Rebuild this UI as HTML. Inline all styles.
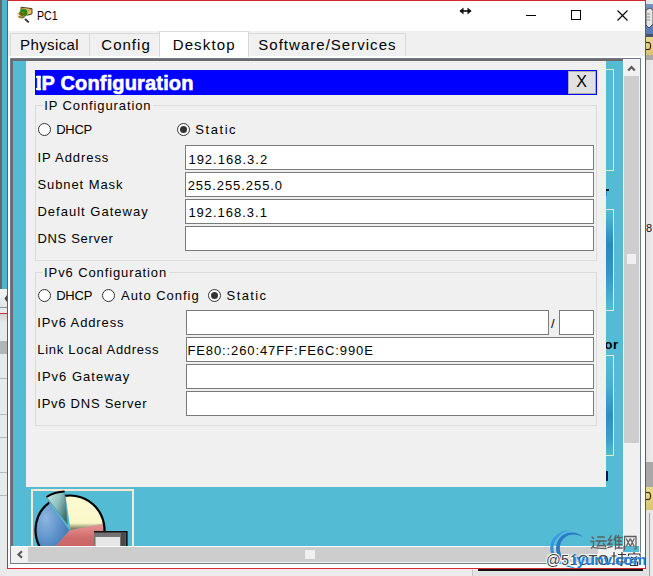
<!DOCTYPE html>
<html><head><meta charset="utf-8">
<style>
*{margin:0;padding:0;box-sizing:border-box}
html,body{width:653px;height:576px;overflow:hidden;background:#ececec;position:relative;font-family:"Liberation Sans",sans-serif;color:#000}
.a{position:absolute}
.t{position:absolute;white-space:nowrap;line-height:1}
.fld{position:absolute;background:#fff;border:1px solid #7a7a7a;height:25px}
.gb{position:absolute;border:1px solid #dcdcdc}
.rad{position:absolute;width:13px;height:13px;border:1px solid #333;border-radius:50%;background:#fff}
.rad.on::after{content:"";position:absolute;left:2px;top:2px;width:7px;height:7px;border-radius:50%;background:#333}
.lbl{font-size:13px;letter-spacing:0.6px}
.ft{font-size:13px;letter-spacing:0.75px}
</style></head><body>
<!-- left strip (background window) -->
<div class="a" style="left:0;top:0;width:2px;height:289px;background:#666"></div>
<div class="a" style="left:2px;top:0;width:5px;height:289px;background:#4fb3ca"></div>
<div class="a" style="left:0;top:289px;width:7px;height:287px;background:#e9e9e9"></div>
<div class="a" style="left:0;top:289px;width:7px;height:18px;background:linear-gradient(180deg,#f4f4f4,#e4e4e4)"></div>
<svg class="a" style="left:4px;top:295px" width="3" height="7" viewBox="0 0 3 7"><path d="M3 0 L0.5 3.5 L3 7 Z" fill="#444"/></svg>
<div class="a" style="left:0;top:307px;width:7px;height:1px;background:#8a93a3"></div>
<div class="a" style="left:0;top:313px;width:7px;height:1px;background:#d9262f"></div>
<div class="a" style="left:0;top:314px;width:7px;height:8px;background:linear-gradient(180deg,#d2d2d2,#e8e8e8)"></div>
<div class="a" style="left:0;top:341px;width:7px;height:13px;background:#b4b4b4"></div>
<div class="a" style="left:0;top:378px;width:7px;height:1px;background:#b8b8b8"></div>
<div class="a" style="left:0;top:414px;width:7px;height:1px;background:#b8b8b8"></div>
<div class="a" style="left:0;top:437px;width:7px;height:1px;background:#b8b8b8"></div>
<div class="a" style="left:0;top:472px;width:7px;height:1px;background:#b8b8b8"></div>
<div class="a" style="left:0;top:495px;width:7px;height:1px;background:#b8b8b8"></div>
<!-- right strip (background window) -->
<div class="a" style="left:646px;top:0;width:7px;height:576px;background:linear-gradient(90deg,#e2e2e2,#ececec)"></div>
<div class="a" style="left:646px;top:4px;width:7px;height:30px;background:linear-gradient(180deg,#7592c2,#587bb2)"></div>
<svg class="a" style="left:646px;top:6px" width="7" height="24" viewBox="0 0 7 24"><path d="M0 4 L4 2 L7 4 L7 18 L3 22 L0 19 Z" fill="#e6e6e6" stroke="#333" stroke-width="0.8"/><path d="M1 8 L4 8 M1 11 L4 11 M1 14 L4 14" stroke="#777" stroke-width="0.8"/></svg>
<div class="a" style="left:646px;top:34px;width:7px;height:3px;background:#44546e"></div>
<div class="a" style="left:646px;top:37px;width:7px;height:18px;background:linear-gradient(180deg,#e9da8c,#d8c570)"></div>
<div class="a" style="left:646px;top:42px;width:5px;height:8px;border:1.5px solid #301010;border-left:none;border-radius:0 50% 50% 0"></div>
<div class="a" style="left:646px;top:55px;width:7px;height:5px;background:#a9a9a9"></div>
<div class="t" style="left:646px;top:223px;font-size:11px;color:#111">8</div>
<div class="a" style="left:646px;top:462px;width:7px;height:25px;background:#a8a8a8"></div>
<div class="a" style="left:646px;top:487px;width:7px;height:23px;background:linear-gradient(180deg,#e9da8c,#d8c570)"></div>
<div class="a" style="left:646px;top:492px;width:5px;height:8px;border:1.5px solid #301010;border-left:none;border-radius:0 50% 50% 0"></div>
<div class="a" style="left:649px;top:513px;width:1px;height:63px;background:#a0a0a0"></div>
<!-- window -->
<div class="a" style="left:7px;top:0;width:639px;height:569px;border:1px solid #d9262f;background:#fff"></div>
<!-- title -->
<svg class="a" style="left:14px;top:4px" width="22" height="22" viewBox="0 0 22 22">
  <path d="M7 3.2 L18 4.6 L18 9.8 L13.5 11.2 L7 8 Z" fill="#e9c268" stroke="#3a2a10" stroke-width="0.9"/>
  <path d="M7.5 3.6 L13.5 7 L18 4.8" fill="none" stroke="#8a6a2a" stroke-width="0.6"/>
  <circle cx="7.6" cy="10.8" r="4.8" fill="#e4e4e4" opacity="0.8"/>
  <circle cx="9.6" cy="8.8" r="3.8" fill="#1c8c1c"/>
  <path d="M11 15 L14.8 18.4" stroke="#333" stroke-width="1.8"/>
  <text x="4.6" y="14.2" font-family="Liberation Sans" font-weight="bold" font-size="9.5" fill="#e8b800" stroke="#4a3a00" stroke-width="0.5">S</text>
</svg>
<div class="t" style="left:36.5px;top:9.5px;font-size:12.5px;letter-spacing:0px;transform:scaleX(0.85);transform-origin:0 0;color:#000">PC1</div>
<svg class="a" style="left:459px;top:7px" width="13" height="8" viewBox="0 0 13 8"><path d="M1 4 L12 4" stroke="#111" stroke-width="1.6"/><path d="M0.5 4 L4.5 0.5 L4.5 7.5 Z M12.5 4 L8.5 0.5 L8.5 7.5 Z" fill="#111"/></svg>
<div class="a" style="left:526px;top:15px;width:10px;height:1px;background:#000"></div>
<div class="a" style="left:571px;top:10px;width:10px;height:10px;border:1px solid #000"></div>
<svg class="a" style="left:617px;top:10px" width="11" height="11" viewBox="0 0 11 11"><path d="M0.5 0.5 L10.5 10.5 M10.5 0.5 L0.5 10.5" stroke="#000" stroke-width="1.1"/></svg>

<!-- tab bar -->
<div class="a" style="left:8px;top:31px;width:637px;height:25px;background:#f0f0f0"></div>
<div class="a" style="left:10px;top:33px;width:80px;height:23px;border:1px solid #d9d9d9;border-bottom:none;background:#f0f0f0"></div>
<div class="a" style="left:89px;top:33px;width:71px;height:23px;border:1px solid #d9d9d9;border-bottom:none;background:#f0f0f0"></div>
<div class="a" style="left:248px;top:33px;width:158px;height:23px;border:1px solid #d9d9d9;border-bottom:none;background:#f0f0f0"></div>
<div class="a" style="left:159px;top:31px;width:90px;height:26px;border:1px solid #d9d9d9;border-bottom:none;background:#fff"></div>
<div class="t" style="left:20px;top:37px;font-size:15px;letter-spacing:0.4px">Physical</div>
<div class="t" style="left:101.3px;top:37px;font-size:15px;letter-spacing:1.02px">Config</div>
<div class="t" style="left:172.7px;top:37px;font-size:15px;letter-spacing:1.13px">Desktop</div>
<div class="t" style="left:258.3px;top:37px;font-size:15px;letter-spacing:1.02px">Software/Services</div>

<!-- panel -->
<div class="a" style="left:10px;top:58px;width:631px;height:506px;border:1px solid #737b8a;background:#f0f0f0"></div>
<div class="a" style="left:11px;top:59px;width:612px;height:487px;background:#53bcd4;border-left:2px solid #6b6b6b;border-top:2px solid #6b6b6b"></div>

<!-- right-side background frames -->
<div class="a" style="left:600px;top:69px;width:14px;height:102px;border:1px solid #f2e6c9"></div>
<div class="a" style="left:600px;top:209px;width:14px;height:102px;border:1px solid #f2e6c9;background:linear-gradient(180deg,#53bcd4 0%,#2a88bb 35%,#3596c4 65%,#53bcd4 100%)"></div>
<div class="a" style="left:600px;top:355px;width:14px;height:101px;border:1px solid #f2e6c9;background:linear-gradient(180deg,#53bcd4 0%,#4aaed0 30%,#2f8fbf 60%,#3d9fc6 85%,#53bcd4 100%)"></div>
<div class="t" style="left:604.5px;top:337.5px;font-size:13px;font-weight:bold;letter-spacing:0.6px;color:#000">or</div>
<div class="a" style="left:606px;top:471px;width:2px;height:10px;background:#0a1a50"></div>
<div class="a" style="left:606px;top:189px;width:3px;height:2px;background:#111"></div>
<div class="a" style="left:606px;top:191px;width:1px;height:5px;background:#2a8ad0"></div>

<!-- desktop icon -->
<div class="a" style="left:31px;top:489px;width:103px;height:60px;border:2px solid #f7e8d4;border-bottom:none"></div>
<svg class="a" style="left:0;top:0" width="653" height="546" viewBox="0 0 653 546">
  <defs>
    <radialGradient id="gb" cx="0.3" cy="0.3" r="0.8"><stop offset="0" stop-color="#8fb6e0"/><stop offset="0.5" stop-color="#5f93cc"/><stop offset="1" stop-color="#3f6fa8"/></radialGradient>
    <linearGradient id="gy" x1="0" y1="0" x2="0" y2="1"><stop offset="0" stop-color="#fdfbd2"/><stop offset="0.8" stop-color="#faf7c8"/><stop offset="1" stop-color="#6b6440"/></linearGradient>
    <linearGradient id="gr" x1="0" y1="0" x2="0" y2="1"><stop offset="0" stop-color="#e89a9a"/><stop offset="0.35" stop-color="#cf6a6a"/><stop offset="1" stop-color="#c45c5c"/></linearGradient>
    <linearGradient id="gt" x1="0" y1="0" x2="1" y2="0.6"><stop offset="0" stop-color="#cde8e8"/><stop offset="0.55" stop-color="#8fc0c0"/><stop offset="1" stop-color="#3f7070"/></linearGradient>
  </defs>
  <path d="M70 530 L49.5 502.3 A34.5 34.5 0 0 0 47.3 556 Z" fill="url(#gb)"/>
  <path d="M70 530 L47.3 556 A34.5 34.5 0 0 0 103.9 523.6 Z" fill="url(#gr)"/>
  <path d="M70 530 L103.9 523.6 A34.5 34.5 0 0 0 64.9 495.9 Z" fill="url(#gy)"/>
  <path d="M49.5 502.3 A34.5 34.5 0 0 0 47.3 556" fill="none" stroke="#000" stroke-width="2.2"/>
  <path d="M47.3 556 A34.5 34.5 0 1 0 64.9 495.9" fill="none" stroke="#000" stroke-width="2.2"/>
  <path d="M70 530 L49.5 502.3 M70 530 L64.9 495.9" stroke="#53bcd4" stroke-width="1.2"/>
  <path d="M67.5 524.5 L46.5 497 A34.5 34.5 0 0 1 64.5 491.6 Z" fill="url(#gt)" stroke="#4a7a7a" stroke-width="0.5"/>
  <path d="M46.5 497 A34.5 34.5 0 0 1 64.5 491.6" fill="none" stroke="#000" stroke-width="2"/>
  <rect x="94" y="531" width="33.5" height="20" fill="#727272"/>
  <path d="M94 531.7 L126.8 531.7 L126.8 551" fill="none" stroke="#111" stroke-width="1.5"/>
  <path d="M121 533 L125.5 533 L125.5 551 L121 551 Z" fill="#4a4a4a"/>
  <rect x="95.5" y="537" width="24.5" height="12" fill="#e6e6e6"/>
</svg>
<!-- dialog -->
<div class="a" style="left:26px;top:61px;width:580px;height:426px;background:#f0f0f0"></div>
<div class="a" style="left:35px;top:70px;width:562px;height:25px;background:#0000ff"></div>
<div class="t" style="left:35.9px;top:73px;font-size:20px;letter-spacing:0.16px;font-weight:bold;color:#fff;-webkit-text-stroke:0.6px #fff">IP Configuration</div>
<div class="a" style="left:36px;top:76px;width:5px;height:2px;background:#fff"></div>
<div class="a" style="left:36px;top:88px;width:5px;height:2px;background:#fff"></div>
<div class="a" style="left:568px;top:71px;width:28px;height:23px;background:#e1e1e1;border:1px solid #adadad"></div>
<div class="t" style="left:576.3px;top:73.5px;font-size:16px;">X</div>

<!-- group 1 -->
<div class="gb" style="left:35px;top:105px;width:562px;height:156px"></div>
<div class="a" style="left:43px;top:98px;width:110px;height:14px;background:#f0f0f0"></div>
<div class="t lbl" style="left:44.3px;top:99px;letter-spacing:0.88px">IP Configuration</div>
<div class="rad" style="left:38px;top:123px"></div>
<div class="t lbl" style="left:56.3px;top:123px;letter-spacing:-0.33px">DHCP</div>
<div class="rad on" style="left:177px;top:123px"></div>
<div class="t lbl" style="left:195.3px;top:123px;letter-spacing:1.56px">Static</div>

<div class="t lbl" style="left:37.4px;top:151px;letter-spacing:0.92px">IP Address</div>
<div class="t lbl" style="left:37.4px;top:178px;letter-spacing:0.92px">Subnet Mask</div>
<div class="t lbl" style="left:37.4px;top:204.5px;letter-spacing:1.01px">Default Gateway</div>
<div class="t lbl" style="left:37.4px;top:231.5px;letter-spacing:0.69px">DNS Server</div>
<div class="fld" style="left:185px;top:145px;width:409px"></div>
<div class="fld" style="left:185px;top:172px;width:409px"></div>
<div class="fld" style="left:185px;top:199px;width:409px"></div>
<div class="fld" style="left:185px;top:226px;width:409px"></div>
<div class="t ft" style="left:188.4px;top:152.5px;letter-spacing:1.01px">192.168.3.2</div>
<div class="t ft" style="left:187.7px;top:179px;letter-spacing:0.94px">255.255.255.0</div>
<div class="t ft" style="left:188.4px;top:206px;letter-spacing:0.98px">192.168.3.1</div>

<!-- group 2 -->
<div class="gb" style="left:35px;top:272px;width:562px;height:154px"></div>
<div class="a" style="left:43px;top:265px;width:126px;height:14px;background:#f0f0f0"></div>
<div class="t lbl" style="left:44.1px;top:266px;letter-spacing:0.89px">IPv6 Configuration</div>
<div class="rad" style="left:38px;top:289px"></div>
<div class="t lbl" style="left:56.2px;top:289px;letter-spacing:-0.23px">DHCP</div>
<div class="rad" style="left:102px;top:289px"></div>
<div class="t lbl" style="left:121px;top:289px;letter-spacing:0.97px">Auto Config</div>
<div class="rad on" style="left:208px;top:289px"></div>
<div class="t lbl" style="left:226.6px;top:289px;letter-spacing:1.4px">Static</div>

<div class="t lbl" style="left:37.3px;top:316px;letter-spacing:0.88px">IPv6 Address</div>
<div class="t lbl" style="left:37.3px;top:342.6px;letter-spacing:0.71px">Link Local Address</div>
<div class="t lbl" style="left:37.3px;top:369.6px;letter-spacing:1.01px">IPv6 Gateway</div>
<div class="t lbl" style="left:37.3px;top:396.8px;letter-spacing:0.74px">IPv6 DNS Server</div>
<div class="fld" style="left:186px;top:310px;width:363px"></div>
<div class="t lbl" style="left:551px;top:317px">/</div>
<div class="fld" style="left:559px;top:310px;width:35px"></div>
<div class="fld" style="left:186px;top:337px;width:408px"></div>
<div class="fld" style="left:186px;top:364px;width:408px"></div>
<div class="fld" style="left:186px;top:391px;width:408px"></div>
<div class="t ft" style="left:187.4px;top:343.5px;letter-spacing:0.9px">FE80::260:47FF:FE6C:990E</div>

<!-- vertical scrollbar -->
<div class="a" style="left:623px;top:59px;width:1px;height:487px;background:#fff"></div>
<div class="a" style="left:624px;top:59px;width:16px;height:504px;background:#f0f0f0"></div>
<svg class="a" style="left:624px;top:59px" width="16" height="17" viewBox="0 0 16 17"><path d="M4.2 11.5 L7.5 8 L10.8 11.5" fill="none" stroke="#5a5a5a" stroke-width="2.2"/></svg>
<div class="a" style="left:624px;top:76px;width:15px;height:367px;background:#cdcdcd"></div>
<div class="a" style="left:627px;top:254px;width:9px;height:10px;background:#f0f0f0"></div>

<!-- horizontal scrollbar -->
<div class="a" style="left:11px;top:546px;width:612px;height:1px;background:#fff"></div>
<div class="a" style="left:11px;top:547px;width:612px;height:16px;background:#f0f0f0"></div>
<svg class="a" style="left:11px;top:547px" width="17" height="16" viewBox="0 0 17 16"><path d="M11 4.2 L7.5 7.5 L11 10.8" fill="none" stroke="#5a5a5a" stroke-width="2.2"/></svg>
<div class="a" style="left:28px;top:547px;width:570px;height:15px;background:#cdcdcd"></div>
<div class="a" style="left:305px;top:550px;width:10px;height:9px;background:#f0f0f0"></div>

<!-- watermark -->
<div class="a" style="left:623px;top:546px;width:16px;height:6px;background:#53bcd4"></div>
<div class="a" style="left:472px;top:570px;width:174px;height:6px;background:#e2e2e2;border-left:1px solid #c4c4c4"></div>
<div class="a" style="left:478px;top:569px;width:165px;height:2px;background:#111"></div>
<svg class="a" style="left:540px;top:520px" width="113" height="56" viewBox="540 520 113 56">
  <defs>
    <linearGradient id="wl" x1="0" y1="0" x2="0" y2="1"><stop offset="0" stop-color="#3aa0e8"/><stop offset="1" stop-color="#1c86dc"/></linearGradient>
  </defs>
  <path d="M570 529.5 C556 531 549 541 550.5 551 C552 561 562 567 577 568.5 C565 565 555 559 553.5 550 C552.5 541 559 533 570 529.5 Z" fill="url(#wl)"/>
  <path d="M583 537 C578 532 570 531 563 535 C556 540 555 548 557 554 C559 559 563 562 568 563 C562 558 559 552 560 546 C561 539 567 534 575 534.5 C578 535 581 536 583 537 Z" fill="#2a78c8"/>
  <g fill="none" stroke="#5e5e5e" stroke-width="1.3" stroke-linecap="square">
    <!-- 运 -->
    <path d="M598 537 L604 537 M596 541 L606 541 M600 541 L597.5 546 L605 545.5 M603.5 543.5 L605.5 546.5"/>
    <path d="M592 537 L593.5 538.5 M591 541.5 L593.5 541.5 L593.5 546 L591.5 548 M593 547 C596 548.5 600 548.5 606 548.5"/>
    <!-- 维 -->
    <path d="M611 536 L608.5 540 L611.5 540 L608 544.5 L612 544 M608 547.5 L612 546.5"/>
    <path d="M616 535.5 L614 540 M615.5 538 L615.5 549 M617 537.5 L622 537.5 M618.5 535.5 L617.5 537.5 M617 541 L621.5 541 M617 544.5 L621.5 544.5 M617 548 L622 548 M619 537.5 L619 548"/>
    <!-- 网 -->
    <path d="M624.5 549.5 L624.5 536.5 L636 536.5 L636 548.5 L634.5 549 M626.5 539 L630 546 M630 539 L626.5 546 M630.5 539 L634 546 M634 539 L630.5 546"/>
  </g>
  <g fill="none" stroke="#fff" stroke-width="3.2" stroke-linejoin="round" opacity="0.9">
    <path d="M614 552 L614 565 M611.5 556 L616.5 556 M618 554.5 L626 554.5 M618 558 L626 558 L626 562 L618 562 Z M622 552 L622 565.5 M620 565 L622 565.5"/>
    <path d="M634 552 L634 553.5 M628.5 556 L628.5 554 L640 554 L640 556 M631 557 L637 560 M637 556.5 L630 561 M630.5 562 L637.5 562 L637.5 565.5 L630.5 565.5 Z"/>
  </g>
  <g fill="none" stroke="#333" stroke-width="1.2">
    <path d="M614 552 L614 565 M611.5 556 L616.5 556 M618 554.5 L626 554.5 M618 558 L626 558 L626 562 L618 562 Z M622 552 L622 565.5 M620 565 L622 565.5"/>
    <path d="M634 552 L634 553.5 M628.5 556 L628.5 554 L640 554 L640 556 M631 557 L637 560 M637 556.5 L630 561 M630.5 562 L637.5 562 L637.5 565.5 L630.5 565.5 Z"/>
  </g>
  <text x="546" y="564.5" font-family="Liberation Sans" font-size="14.5" fill="#404040" stroke="#fff" stroke-width="2" paint-order="stroke" letter-spacing="0.3">@51CTO</text>
  <text x="572.5" y="564.6" font-family="Liberation Sans" font-weight="bold" font-size="15.5" fill="#1c82da" letter-spacing="-0.2">iyunv.com</text>
</svg>
</body></html>
